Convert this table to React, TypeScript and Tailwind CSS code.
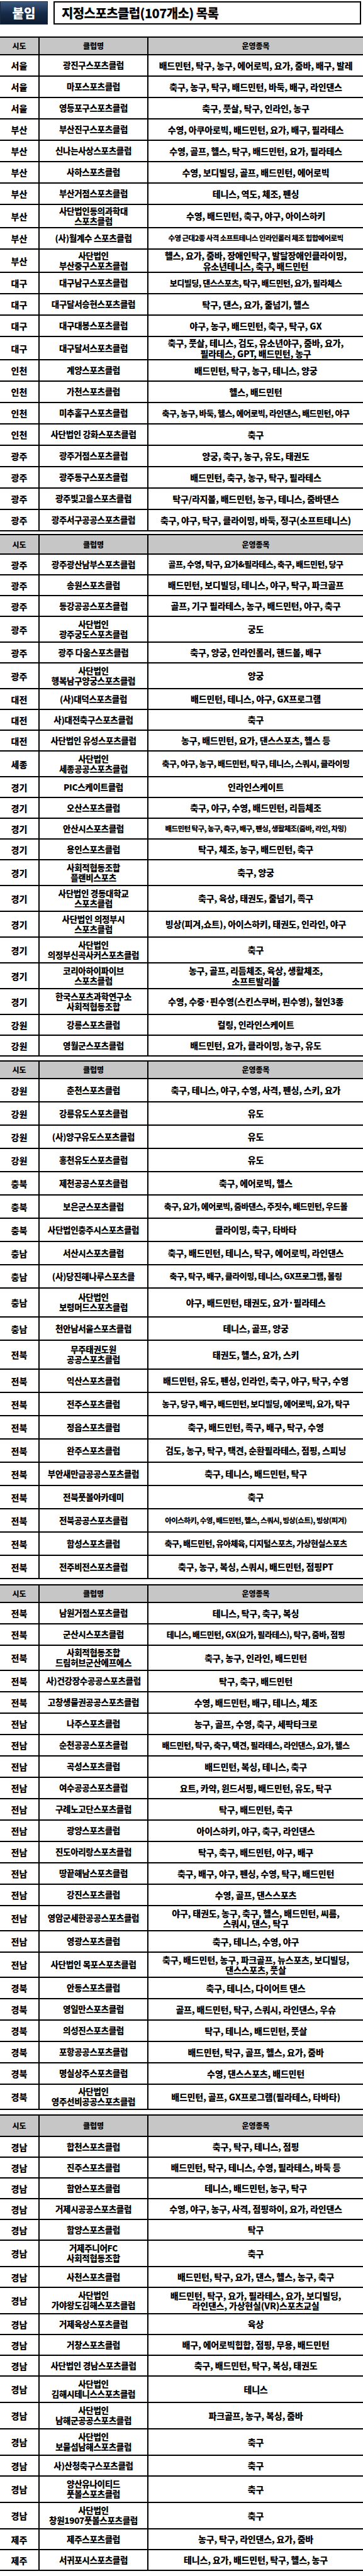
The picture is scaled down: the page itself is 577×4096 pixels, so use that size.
import React from "react";

type Row = [string, string, string, ("s" | "xs")?];

type Table = {
  mt: string;
  head: string;
  h1: string;
  h2: string;
  rows: Row[];
};

const sizeCls = {
  m: "text-[14px] tracking-[-0.2px]",
  s: "text-[13px] tracking-[-0.5px]",
  xs: "text-[11.5px] tracking-[-0.6px]",
};

const TABLES: Table[] = [
  {
    mt: "mt-[19px]",
    head: "h-[30px]",
    h1: "h-[34px]",
    h2: "h-[37px]",
    rows: [
      ["서울", "광진구스포츠클럽", "배드민턴, 탁구, 농구, 에어로빅, 요가, 줌바, 배구, 발레"],
      ["서울", "마포스포츠클럽", "축구, 농구, 탁구, 배드민턴, 바둑, 배구, 라인댄스"],
      ["서울", "영등포구스포츠클럽", "축구, 풋살, 탁구, 인라인, 농구"],
      ["부산", "부산진구스포츠클럽", "수영, 아쿠아로빅, 배드민턴, 요가, 배구, 필라테스"],
      ["부산", "신나는사상스포츠클럽", "수영, 골프, 헬스, 탁구, 배드민턴, 요가, 필라테스"],
      ["부산", "사하스포츠클럽", "수영, 보디빌딩, 골프, 배드민턴, 에어로빅"],
      ["부산", "부산거점스포츠클럽", "테니스, 역도, 체조, 펜싱"],
      ["부산", "사단법인동의과학대\n스포츠클럽", "수영, 배드민턴, 축구, 야구, 아이스하키"],
      ["부산", "(사)월계수 스포츠클럽", "수영 근대2종 사격 소프트테니스 인라인롤러 체조 힙합에어로빅", "xs"],
      ["부산", "사단법인\n부산중구스포츠클럽", "헬스, 요가, 줌바, 장애인탁구, 발달장애인클라이밍,\n유소년테니스, 축구, 배드민턴"],
      ["대구", "대구남구스포츠클럽", "보디빌딩, 댄스스포츠, 탁구, 배드민턴, 요가, 필라체스", "s"],
      ["대구", "대구달서승현스포츠클럽", "탁구, 댄스, 요가, 줄넘기, 헬스"],
      ["대구", "대구대봉스포츠클럽", "야구, 농구, 배드민턴, 축구, 탁구, GX"],
      ["대구", "대구달서스포츠클럽", "축구, 풋살, 테니스, 검도, 유소년야구, 줌바, 요가,\n필라테스, GPT, 배드민턴, 농구"],
      ["인천", "계양스포츠클럽", "배드민턴, 탁구, 농구, 테니스, 양궁"],
      ["인천", "가천스포츠클럽", "헬스, 배드민턴"],
      ["인천", "미추홀구스포츠클럽", "축구, 농구, 바둑, 헬스, 에어로빅, 라인댄스, 배드민턴, 야구", "s"],
      ["인천", "사단법인 강화스포츠클럽", "축구"],
      ["광주", "광주거점스포츠클럽", "양궁, 축구, 농구, 유도, 태권도"],
      ["광주", "광주동구스포츠클럽", "배드민턴, 축구, 농구, 탁구, 필라테스"],
      ["광주", "광주빛고을스포츠클럽", "탁구/라지볼, 배드민턴, 농구, 테니스, 줌바댄스"],
      ["광주", "광주서구공공스포츠클럽", "축구, 야구, 탁구, 클라이밍, 바둑, 정구(소프트테니스)"],
    ],
  },
  {
    mt: "mt-[4px]",
    head: "h-[33px]",
    h1: "h-[33px]",
    h2: "h-[41px]",
    rows: [
      ["광주", "광주광산남부스포츠클럽", "골프, 수영, 탁구, 요가&필라테스, 축구, 배드민턴, 당구", "s"],
      ["광주", "송원스포츠클럽", "배드민턴, 보디빌딩, 테니스, 야구, 탁구, 파크골프"],
      ["광주", "동강공공스포츠클럽", "골프, 기구 필라테스, 농구, 배드민턴, 야구, 축구"],
      ["광주", "사단법인\n광주궁도스포츠클럽", "궁도"],
      ["광주", "광주 다움스포츠클럽", "축구, 양궁, 인라인롤러, 핸드볼, 배구"],
      ["광주", "사단법인\n행복남구양궁스포츠클럽", "양궁"],
      ["대전", "(사)대덕스포츠클럽", "배드민턴, 테니스, 야구, GX프로그램"],
      ["대전", "사)대전축구스포츠클럽", "축구"],
      ["대전", "사단법인 유성스포츠클럽", "농구, 배드민턴, 요가, 댄스스포츠, 헬스 등"],
      ["세종", "사단법인\n세종공공스포츠클럽", "축구, 야구, 농구, 배드민턴, 탁구, 테니스, 스쿼시, 클라이밍", "s"],
      ["경기", "PIC스케이트클럽", "인라인스케이트"],
      ["경기", "오산스포츠클럽", "축구, 야구, 수영, 배드민턴, 리듬체조"],
      ["경기", "안산시스포츠클럽", "배드민턴 탁구, 농구, 축구, 배구, 펜싱, 생활체조(줌바, 라인, 차밍)", "xs"],
      ["경기", "용인스포츠클럽", "탁구, 체조, 농구, 배드민턴, 축구"],
      ["경기", "사회적협동조합\n플랜비스포츠", "축구, 양궁"],
      ["경기", "사단법인 경동대학교\n스포츠클럽", "축구, 육상, 태권도, 줄넘기, 족구"],
      ["경기", "사단법인 의정부시\n스포츠클럽", "빙상(피겨,쇼트), 아이스하키, 태권도, 인라인, 야구"],
      ["경기", "사단법인\n의정부신곡사커스포츠클럽", "축구"],
      ["경기", "코리아하이파이브\n스포츠클럽", "농구, 골프, 리듬체조, 육상, 생활체조,\n소프트발리볼"],
      ["경기", "한국스포츠과학연구소\n사회적협동조합", "수영, 수중·핀수영(스킨스쿠버, 핀수영), 철인3종"],
      ["강원", "강릉스포츠클럽", "컬링, 인라인스케이트"],
      ["강원", "영월군스포츠클럽", "배드민턴, 요가, 클라이밍, 농구, 유도"],
    ],
  },
  {
    mt: "mt-[6px]",
    head: "h-[30px]",
    h1: "h-[37px]",
    h2: "h-[46px]",
    rows: [
      ["강원", "춘천스포츠클럽", "축구, 테니스, 야구, 수영, 사격, 펜싱, 스키, 요가"],
      ["강원", "강릉유도스포츠클럽", "유도"],
      ["강원", "(사)양구유도스포츠클럽", "유도"],
      ["강원", "홍천유도스포츠클럽", "유도"],
      ["충북", "제천공공스포츠클럽", "축구, 에어로빅, 헬스"],
      ["충북", "보은군스포츠클럽", "축구, 요가, 에어로빅, 줌바댄스, 주짓수, 배드민턴, 우드볼", "s"],
      ["충북", "사단법인충주시스포츠클럽", "클라이밍, 축구, 타바타"],
      ["충남", "서산시스포츠클럽", "축구, 배드민턴, 테니스, 탁구, 에어로빅, 라인댄스"],
      ["충남", "(사)당진해나루스포츠클", "축구, 탁구, 배구, 클라이밍, 테니스, GX프로그램, 볼링", "s"],
      ["충남", "사단법인\n보령머드스포츠클럽", "야구, 배드민턴, 태권도, 요가·필라테스"],
      ["충남", "천안남서울스포츠클럽", "테니스, 골프, 양궁"],
      ["전북", "무주태권도원\n공공스포츠클럽", "태권도, 헬스, 요가, 스키"],
      ["전북", "익산스포츠클럽", "배드민턴, 유도, 펜싱, 인라인, 축구, 야구, 탁구, 수영"],
      ["전북", "전주스포츠클럽", "농구, 당구, 배구, 배드민턴, 보디빌딩, 에어로빅, 요가, 탁구", "s"],
      ["전북", "정읍스포츠클럽", "축구, 배드민턴, 족구, 배구, 탁구, 수영"],
      ["전북", "완주스포츠클럽", "검도, 농구, 탁구, 택견, 순환필라테스, 점핑, 스피닝"],
      ["전북", "부안새만금공공스포츠클럽", "축구, 테니스, 배드민턴, 탁구"],
      ["전북", "전북풋볼아카데미", "축구"],
      ["전북", "전북공공스포츠클럽", "아이스하키, 수영, 배드민턴, 헬스, 스쿼시, 빙상(쇼트), 빙상(피겨)", "xs"],
      ["전북", "함성스포츠클럽", "축구, 배드민턴, 유아체육, 디지털스포츠, 가상현실스포츠", "s"],
      ["전북", "전주비전스포츠클럽", "축구, 농구, 복싱, 스쿼시, 배드민턴, 점핑PT"],
    ],
  },
  {
    mt: "mt-[8px]",
    head: "h-[30px]",
    h1: "h-[34px]",
    h2: "h-[40px]",
    rows: [
      ["전북", "남원거점스포츠클럽", "테니스, 탁구, 축구, 복싱"],
      ["전북", "군산시스포츠클럽", "테니스, 배드민턴, GX(요가, 필라테스), 탁구, 줌바, 점핑", "s"],
      ["전북", "사회적협동조합\n드림허브군산에프에스", "축구, 농구, 인라인, 배드민턴"],
      ["전북", "사)건강장수공공스포츠클럽", "탁구, 축구, 배드민턴"],
      ["전북", "고창생물권공공스포츠클럽", "수영, 배드민턴, 배구, 테니스, 체조"],
      ["전남", "나주스포츠클럽", "농구, 골프, 수영, 축구, 세팍타크로"],
      ["전남", "순천공공스포츠클럽", "배드민턴, 탁구, 축구, 택견, 필라테스, 라인댄스, 요가, 헬스", "s"],
      ["전남", "곡성스포츠클럽", "배드민턴, 복싱, 테니스, 축구"],
      ["전남", "여수공공스포츠클럽", "요트, 카약, 윈드서핑, 배드민턴, 유도, 탁구"],
      ["전남", "구례노고단스포츠클럽", "탁구, 배드민턴, 축구"],
      ["전남", "광양스포츠클럽", "아이스하키, 야구, 축구, 라인댄스"],
      ["전남", "진도아리랑스포츠클럽", "탁구, 축구, 배드민턴, 야구, 배구"],
      ["전남", "땅끝해남스포츠클럽", "축구, 배구, 야구, 펜싱, 수영, 탁구, 배드민턴"],
      ["전남", "강진스포츠클럽", "수영, 골프, 댄스스포츠"],
      ["전남", "영암군세한공공스포츠클럽", "야구, 태권도, 농구, 축구, 헬스, 배드민턴, 씨름,\n스쿼시, 댄스, 탁구"],
      ["전남", "영광스포츠클럽", "축구, 테니스, 수영, 야구"],
      ["전남", "사단법인 목포스포츠클럽", "축구, 배드민턴, 농구, 파크골프, 뉴스포츠, 보디빌딩,\n댄스스포츠, 풋살"],
      ["경북", "안동스포츠클럽", "축구, 테니스, 다이어트 댄스"],
      ["경북", "영일만스포츠클럽", "골프, 배드민턴, 탁구, 스쿼시, 라인댄스, 우슈"],
      ["경북", "의성진스포츠클럽", "탁구, 테니스, 배드민턴, 풋살"],
      ["경북", "포항공공스포츠클럽", "배드민턴, 탁구, 골프, 헬스, 요가, 줌바"],
      ["경북", "명실상주스포츠클럽", "수영, 댄스스포츠, 배드민턴"],
      ["경북", "사단법인\n영주선비공공스포츠클럽", "배드민턴, 골프, GX프로그램(필라테스, 타바타)"],
    ],
  },
  {
    mt: "mt-[7px]",
    head: "h-[36px]",
    h1: "h-[33px]",
    h2: "h-[42px]",
    rows: [
      ["경남", "합천스포츠클럽", "축구, 탁구, 테니스, 점핑"],
      ["경남", "진주스포츠클럽", "배드민턴, 탁구, 테니스, 수영, 필라테스, 바둑 등"],
      ["경남", "함안스포츠클럽", "테니스, 배드민턴, 농구, 탁구"],
      ["경남", "거제시공공스포츠클럽", "수영, 야구, 농구, 사격, 점핑하이, 요가, 라인댄스"],
      ["경남", "함양스포츠클럽", "탁구"],
      ["경남", "거제주니어FC\n사회적협동조합", "축구"],
      ["경남", "사천스포츠클럽", "배드민턴, 탁구, 요가, 댄스, 헬스, 농구, 축구"],
      ["경남", "사단법인\n가야왕도김해스포츠클럽", "배드민턴, 탁구, 요가, 필라테스, 요가, 보디빌딩,\n라인댄스, 가상현실(VR)스포츠교실"],
      ["경남", "거제육상스포츠클럽", "육상"],
      ["경남", "거창스포츠클럽", "배구, 에어로빅힙합, 점핑, 무용, 배드민턴"],
      ["경남", "사단법인 경남스포츠클럽", "축구, 배드민턴, 탁구, 복싱, 태권도"],
      ["경남", "사단법인\n김해시테니스스포츠클럽", "테니스"],
      ["경남", "사단법인\n남해군공공스포츠클럽", "파크골프, 농구, 복싱, 줌바"],
      ["경남", "사단법인\n보물섬남해스포츠클럽", "축구"],
      ["경남", "사)산청축구스포츠클럽", "축구"],
      ["경남", "양산유나이티드\n풋볼스포츠클럽", "축구"],
      ["경남", "사단법인\n창원1907풋볼스포츠클럽", "축구"],
      ["제주", "제주스포츠클럽", "농구, 탁구, 라인댄스, 요가, 줌바"],
      ["제주", "서귀포시스포츠클럽", "테니스, 요가, 배드민턴, 탁구, 헬스, 농구"],
    ],
  },
];

function ClubTable({ t }: { t: Table }) {
  return (
    <div className={t.mt}>
      <div className={`grid grid-cols-[63px_173px_1fr] border-y-2 border-black bg-[#c6c6c6] text-[12px] font-black leading-none ${t.head}`}>
        <div className="flex items-center justify-center border-r-2 border-black">시도</div>
        <div className="flex items-center justify-center border-r-2 border-black">클럽명</div>
        <div className="flex items-center justify-center">운영종목</div>
      </div>
      {t.rows.map(([sido, club, sports, size], i) => {
        const tall = club.includes("\n") || sports.includes("\n");
        return (
          <div
            key={i}
            className={`grid grid-cols-[63px_173px_1fr] border-b-2 border-black font-black ${tall ? t.h2 : t.h1}`}
          >
            <div className="flex items-center justify-center border-r-2 border-black text-[14px] leading-none">{sido}</div>
            <div className="flex items-center justify-center whitespace-pre-line border-r-2 border-black text-center text-[13.5px] leading-[1.15] tracking-[-0.3px]">
              {club}
            </div>
            <div className={`flex items-center justify-center whitespace-pre-line px-[2px] text-center leading-[1.15] ${sizeCls[size ?? "m"]}`}>
              {sports}
            </div>
          </div>
        );
      })}
    </div>
  );
}

export default function App() {
  return (
    <div className="w-[577px] bg-white pb-[6px] font-['Noto_Sans_CJK_KR','Noto_Sans',sans-serif] text-black">
      <div className="mt-[2px] flex h-[37px]">
        <div className="flex w-[76px] items-center justify-center border border-[#1a2c44] bg-linear-to-b from-[#3d5a80] via-[#172c4a] to-[#0d1b30] text-[20px] font-black text-white">
          붙임
        </div>
        <div className="ml-[9px] flex w-[489px] items-center border-2 border-black pl-[11px] text-[20px] font-black tracking-[-0.6px]">
          지정스포츠클럽(107개소) 목록
        </div>
      </div>
      {TABLES.map((t, i) => (
        <ClubTable key={i} t={t} />
      ))}
    </div>
  );
}
